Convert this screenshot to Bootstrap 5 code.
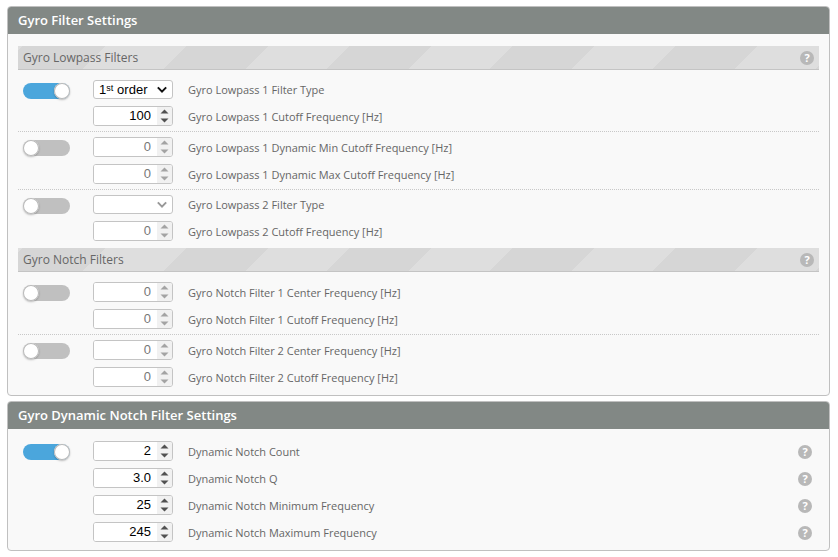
<!DOCTYPE html>
<html lang="en">
<head>
<meta charset="utf-8">
<title>Gyro Filter Settings</title>
<link href="https://cdn.jsdelivr.net/npm/bootstrap@5.3.0/dist/css/bootstrap.min.css" rel="stylesheet">
<style>
html,body{background:#fff;overflow:hidden}
body{font-family:"Open Sans",sans-serif;font-size:11px;color:#666;padding:6px 8px 0 7px}
.gui-box{background:#f9f9f9;border:1px solid #c0c0c0;border-radius:4px;margin-bottom:5px;overflow:hidden}
.gui-head{background:#828885;color:#fff;font-size:13px;font-weight:600;height:27px;line-height:26px;padding-left:10px}
.gui-body{padding:12px 10px 0}
.sub-bar{height:24px;padding-left:5px;padding-right:5px;font-size:12px;color:#666;border-bottom:1px solid #c4c4c4;
background:repeating-linear-gradient(135deg,#dedede 0,#dedede 3.5px,#d6d6d6 3.5px,#d6d6d6 62px,#dedede 62px,#dedede 115.3px)}
.opt-group{padding:5px 0 5px 5px;border-bottom:1px dotted #c8c8c8;gap:7px}
.opt-first{padding-top:10px}
.opt-before-bar{border-bottom:0;padding-bottom:7px}
.opt-final{border-bottom:0;padding-bottom:8px}
.opt-line{height:20px;gap:15px}
.sel-line{height:19px}
.tog-cell{width:55px;flex:none}
.tog{width:47px;height:16px;border-radius:8px;background:#c0c0c0;margin-top:2px}
.tog.on{background:#4ba6dc;justify-content:flex-end}
.tog-knob{width:16px;height:16px;border-radius:50%;background:#fff;box-shadow:0 0 0 1px #b8b8b8 inset,0 1px 2px rgba(0,0,0,.25)}
.num-box{width:80px;height:20px;flex:none;background:#fff;border:1px solid #c4c4c4;border-radius:3px;overflow:hidden}
.num-box input{border:0;padding:0 6px 2px 0;width:63px;height:18px;text-align:right;font:13px "Liberation Sans",sans-serif;color:#000;background:#fff;border-radius:0;min-height:0;box-shadow:none}
.num-box.off input{color:#777}
.spin{width:15px;height:18px;flex:none;background:#f1f1f1}
.spin path{fill:#505050}
.num-box.off .spin path{fill:#a3a3a3}
select.sel-box{width:80px;height:19px;flex:none;padding:0 0 0 5px;border:1px solid #c4c4c4;border-radius:3px;font:13px "Liberation Sans",sans-serif;color:#000;line-height:17px;min-height:0;
background-color:#fff;background-size:10px 7px;background-position:right 5px center;
background-image:url("data:image/svg+xml,%3csvg xmlns='http://www.w3.org/2000/svg' viewBox='0 0 12 8'%3e%3cpath fill='none' stroke='%23111' stroke-width='2.4' d='M1 1.5l5 5 5-5'/%3e%3c/svg%3e")}
select.sel-box.off{background-image:url("data:image/svg+xml,%3csvg xmlns='http://www.w3.org/2000/svg' viewBox='0 0 12 8'%3e%3cpath fill='none' stroke='%23999' stroke-width='2.4' d='M1 1.5l5 5 5-5'/%3e%3c/svg%3e")}
.opt-label{color:#666;font-size:10.97px;white-space:nowrap;padding-top:2px}
.help-dot{width:14px;height:14px;border-radius:50%;background:#b8b8b8;color:#fff;font:bold 11px/14px "Open Sans",sans-serif;text-align:center;flex:none}
.opt-line .help-dot{margin-top:2px}
.dyn-body{padding:12px 17px 8px 15px;gap:7px}
</style>
</head>
<body>
<section class="gui-box">
  <div class="gui-head">Gyro Filter Settings</div>
  <div class="gui-body">
    <div class="sub-bar d-flex align-items-center justify-content-between"><span>Gyro Lowpass Filters</span><span class="help-dot">?</span></div>

    <div class="opt-group opt-first d-flex flex-column">
      <div class="opt-line sel-line d-flex align-items-center">
        <div class="tog-cell"><div class="tog on d-flex"><span class="tog-knob"></span></div></div>
        <select class="form-select sel-box"><option>1ˢᵗ order</option></select>
        <span class="opt-label">Gyro Lowpass 1 Filter Type</span>
      </div>
      <div class="opt-line d-flex align-items-center">
        <div class="tog-cell"></div>
        <div class="num-box d-flex"><input class="form-control" type="text" value="100"><svg class="spin" viewBox="0 0 15 18"><path d="M7.5 2.5l4 4h-8zM7.5 15.5l-4-4h8z"/></svg></div>
        <span class="opt-label">Gyro Lowpass 1 Cutoff Frequency [Hz]</span>
      </div>
    </div>

    <div class="opt-group d-flex flex-column">
      <div class="opt-line d-flex align-items-center">
        <div class="tog-cell"><div class="tog d-flex"><span class="tog-knob"></span></div></div>
        <div class="num-box off d-flex"><input class="form-control" type="text" value="0"><svg class="spin" viewBox="0 0 15 18"><path d="M7.5 2.5l4 4h-8zM7.5 15.5l-4-4h8z"/></svg></div>
        <span class="opt-label">Gyro Lowpass 1 Dynamic Min Cutoff Frequency [Hz]</span>
      </div>
      <div class="opt-line d-flex align-items-center">
        <div class="tog-cell"></div>
        <div class="num-box off d-flex"><input class="form-control" type="text" value="0"><svg class="spin" viewBox="0 0 15 18"><path d="M7.5 2.5l4 4h-8zM7.5 15.5l-4-4h8z"/></svg></div>
        <span class="opt-label">Gyro Lowpass 1 Dynamic Max Cutoff Frequency [Hz]</span>
      </div>
    </div>

    <div class="opt-group opt-before-bar d-flex flex-column">
      <div class="opt-line sel-line d-flex align-items-center">
        <div class="tog-cell"><div class="tog d-flex"><span class="tog-knob"></span></div></div>
        <select class="form-select sel-box off"><option></option></select>
        <span class="opt-label">Gyro Lowpass 2 Filter Type</span>
      </div>
      <div class="opt-line d-flex align-items-center">
        <div class="tog-cell"></div>
        <div class="num-box off d-flex"><input class="form-control" type="text" value="0"><svg class="spin" viewBox="0 0 15 18"><path d="M7.5 2.5l4 4h-8zM7.5 15.5l-4-4h8z"/></svg></div>
        <span class="opt-label">Gyro Lowpass 2 Cutoff Frequency [Hz]</span>
      </div>
    </div>

    <div class="sub-bar d-flex align-items-center justify-content-between"><span>Gyro Notch Filters</span><span class="help-dot">?</span></div>

    <div class="opt-group opt-first d-flex flex-column">
      <div class="opt-line d-flex align-items-center">
        <div class="tog-cell"><div class="tog d-flex"><span class="tog-knob"></span></div></div>
        <div class="num-box off d-flex"><input class="form-control" type="text" value="0"><svg class="spin" viewBox="0 0 15 18"><path d="M7.5 2.5l4 4h-8zM7.5 15.5l-4-4h8z"/></svg></div>
        <span class="opt-label">Gyro Notch Filter 1 Center Frequency [Hz]</span>
      </div>
      <div class="opt-line d-flex align-items-center">
        <div class="tog-cell"></div>
        <div class="num-box off d-flex"><input class="form-control" type="text" value="0"><svg class="spin" viewBox="0 0 15 18"><path d="M7.5 2.5l4 4h-8zM7.5 15.5l-4-4h8z"/></svg></div>
        <span class="opt-label">Gyro Notch Filter 1 Cutoff Frequency [Hz]</span>
      </div>
    </div>

    <div class="opt-group opt-final d-flex flex-column">
      <div class="opt-line d-flex align-items-center">
        <div class="tog-cell"><div class="tog d-flex"><span class="tog-knob"></span></div></div>
        <div class="num-box off d-flex"><input class="form-control" type="text" value="0"><svg class="spin" viewBox="0 0 15 18"><path d="M7.5 2.5l4 4h-8zM7.5 15.5l-4-4h8z"/></svg></div>
        <span class="opt-label">Gyro Notch Filter 2 Center Frequency [Hz]</span>
      </div>
      <div class="opt-line d-flex align-items-center">
        <div class="tog-cell"></div>
        <div class="num-box off d-flex"><input class="form-control" type="text" value="0"><svg class="spin" viewBox="0 0 15 18"><path d="M7.5 2.5l4 4h-8zM7.5 15.5l-4-4h8z"/></svg></div>
        <span class="opt-label">Gyro Notch Filter 2 Cutoff Frequency [Hz]</span>
      </div>
    </div>
  </div>
</section>

<section class="gui-box">
  <div class="gui-head">Gyro Dynamic Notch Filter Settings</div>
  <div class="dyn-body d-flex flex-column">
    <div class="opt-line d-flex align-items-center">
      <div class="tog-cell"><div class="tog on d-flex"><span class="tog-knob"></span></div></div>
      <div class="num-box d-flex"><input class="form-control" type="text" value="2"><svg class="spin" viewBox="0 0 15 18"><path d="M7.5 2.5l4 4h-8zM7.5 15.5l-4-4h8z"/></svg></div>
      <span class="opt-label flex-grow-1">Dynamic Notch Count</span><span class="help-dot">?</span>
    </div>
    <div class="opt-line d-flex align-items-center">
      <div class="tog-cell"></div>
      <div class="num-box d-flex"><input class="form-control" type="text" value="3.0"><svg class="spin" viewBox="0 0 15 18"><path d="M7.5 2.5l4 4h-8zM7.5 15.5l-4-4h8z"/></svg></div>
      <span class="opt-label flex-grow-1">Dynamic Notch Q</span><span class="help-dot">?</span>
    </div>
    <div class="opt-line d-flex align-items-center">
      <div class="tog-cell"></div>
      <div class="num-box d-flex"><input class="form-control" type="text" value="25"><svg class="spin" viewBox="0 0 15 18"><path d="M7.5 2.5l4 4h-8zM7.5 15.5l-4-4h8z"/></svg></div>
      <span class="opt-label flex-grow-1">Dynamic Notch Minimum Frequency</span><span class="help-dot">?</span>
    </div>
    <div class="opt-line d-flex align-items-center">
      <div class="tog-cell"></div>
      <div class="num-box d-flex"><input class="form-control" type="text" value="245"><svg class="spin" viewBox="0 0 15 18"><path d="M7.5 2.5l4 4h-8zM7.5 15.5l-4-4h8z"/></svg></div>
      <span class="opt-label flex-grow-1">Dynamic Notch Maximum Frequency</span><span class="help-dot">?</span>
    </div>
  </div>
</section>
<script src="https://cdn.jsdelivr.net/npm/bootstrap@5.3.0/dist/js/bootstrap.bundle.min.js"></script>
</body>
</html>
